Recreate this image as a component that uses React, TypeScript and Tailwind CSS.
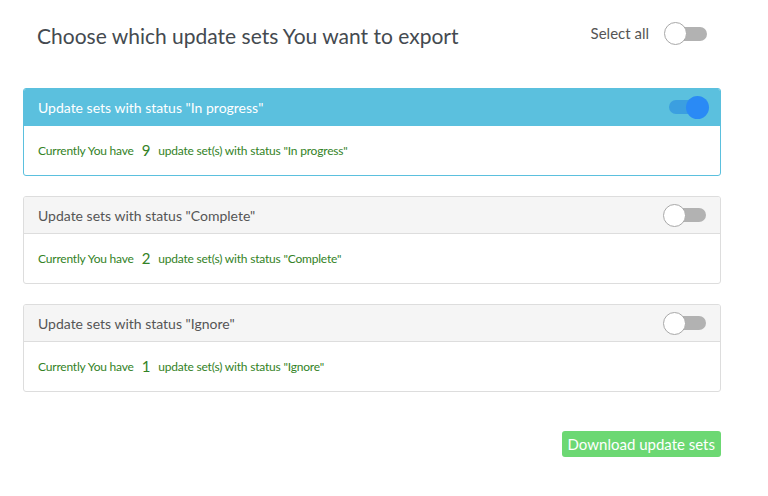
import React, { useState } from 'react';

const font = { fontFamily: 'Lato, "Open Sans", sans-serif' };

const Toggle: React.FC<{ on: boolean; onChange: () => void }> = ({ on, onChange }) => (
  <button
    onClick={onChange}
    className="relative w-[44px] h-[24px] flex items-center"
    aria-pressed={on}
  >
    <span
      className={
        on
          ? 'absolute left-[4px] right-[8px] h-[14px] rounded-full bg-[#3b9fe0]'
          : 'absolute left-[10px] right-[1px] h-[14px] rounded-full bg-[#b2b2b2]'
      }
    />
    <span
      className={
        on
          ? 'absolute right-[0px] w-[23px] h-[23px] rounded-full bg-[#2a8af5]'
          : 'absolute left-[0px] w-[23px] h-[23px] rounded-full bg-white border border-[#a8a8a8]'
      }
    />
  </button>
);

const statuses = [
  { name: 'In progress', count: 9 },
  { name: 'Complete', count: 2 },
  { name: 'Ignore', count: 1 },
];

export default function App() {
  const [selected, setSelected] = useState<Record<string, boolean>>({
    'In progress': true,
    Complete: false,
    Ignore: false,
  });

  const allOn = statuses.every((s) => selected[s.name]);

  const toggleAll = () => {
    const next: Record<string, boolean> = {};
    statuses.forEach((s) => (next[s.name] = !allOn));
    setSelected(next);
  };

  return (
    <div className="w-[768px] h-[496px] bg-white" style={font}>
      <div className="w-[698px] ml-[23px]">
        <div className="flex items-center justify-between h-[78px] pb-[2px]">
          <h1 className="ml-[14px] mb-[4px] text-[21px] text-[#444a50]">
            Choose which update sets You want to export
          </h1>
          <div className="flex items-center gap-[15px] mr-[13px] mb-[9px]">
            <span className="text-[15px] text-[#555]">Select all</span>
            <Toggle on={allOn} onChange={toggleAll} />
          </div>
        </div>

        <div className="flex flex-col gap-[20px] mt-[10px]">
          {statuses.map((s) => {
            const on = selected[s.name];
            return (
              <div
                key={s.name}
                className={
                  on
                    ? 'border border-[#5bc0de] rounded-[3px] overflow-hidden'
                    : 'border border-[#dddddd] rounded-[3px] overflow-hidden'
                }
              >
                <div
                  className={
                    on
                      ? 'h-[37px] flex items-center justify-between pl-[14px] pr-[11px] bg-[#5bc0de] border-b border-[#5bc0de] text-white'
                      : 'h-[37px] flex items-center justify-between pl-[14px] pr-[13px] bg-[#f5f5f5] border-b border-[#dddddd] text-[#555]'
                  }
                >
                  <span className="text-[14px]">Update sets with status "{s.name}"</span>
                  <Toggle
                    on={on}
                    onChange={() => setSelected({ ...selected, [s.name]: !on })}
                  />
                </div>
                <div className="h-[49px] flex items-center pl-[14px] text-[12px] text-[#338226] tracking-[-0.2px]">
                  Currently You have
                  <span className="text-[15px] mx-[8px] leading-none">{s.count}</span>
                  update set(s) with status "{s.name}"
                </div>
              </div>
            );
          })}
        </div>

        <div className="flex justify-end mt-[39px]">
          <button className="h-[26px] px-[6px] rounded-[3px] bg-[#6cd873] text-white text-[15px] leading-none">
            Download update sets
          </button>
        </div>
      </div>
    </div>
  );
}
